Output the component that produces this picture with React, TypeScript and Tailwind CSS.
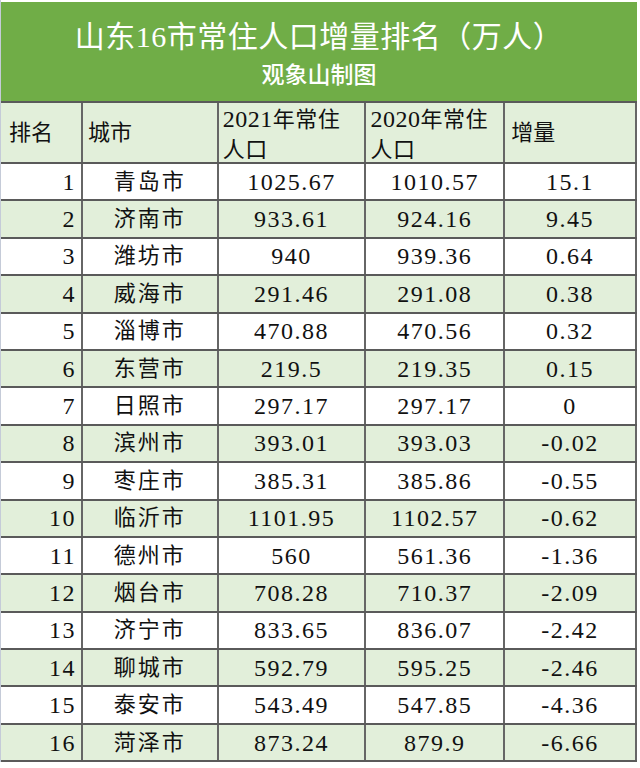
const rows = [
  [1, "青岛市", "1025.67", "1010.57", "15.1"],
  [2, "济南市", "933.61", "924.16", "9.45"],
  [3, "潍坊市", "940", "939.36", "0.64"],
  [4, "威海市", "291.46", "291.08", "0.38"],
  [5, "淄博市", "470.88", "470.56", "0.32"],
  [6, "东营市", "219.5", "219.35", "0.15"],
  [7, "日照市", "297.17", "297.17", "0"],
  [8, "滨州市", "393.01", "393.03", "-0.02"],
  [9, "枣庄市", "385.31", "385.86", "-0.55"],
  [10, "临沂市", "1101.95", "1102.57", "-0.62"],
  [11, "德州市", "560", "561.36", "-1.36"],
  [12, "烟台市", "708.28", "710.37", "-2.09"],
  [13, "济宁市", "833.65", "836.07", "-2.42"],
  [14, "聊城市", "592.79", "595.25", "-2.46"],
  [15, "泰安市", "543.49", "547.85", "-4.36"],
  [16, "菏泽市", "873.24", "879.9", "-6.66"],
];

const font =
  "font-['Liberation_Serif','Noto_Sans_CJK_SC',serif] text-[22px] leading-none text-[#111]";

const num = "text-[24px] tracking-[1.5px]";

export default function App() {
  return (
    <div className="w-[640px] h-[768px] bg-white overflow-hidden">
      <div className="w-[637px] border-l border-[#c5cbd8]">
        <div className="h-[2px] bg-white" />
        <div className="h-[99px] bg-[#70ad47] flex flex-col items-center text-white font-['Liberation_Serif','Noto_Sans_CJK_SC',serif]">
          <div className="mt-[20px] text-[30px] leading-none tracking-[0.5px]">
            山东16市常住人口增量排名（万人）
          </div>
          <div className="mt-[12px] text-[23px] leading-none font-medium">观象山制图</div>
        </div>
        <div className={`flex h-[63px] bg-[#e2efda] border-t-2 border-b-2 border-[#5a5a5a] ${font}`}>
          <div className="w-[82px] border-r-2 border-[#666] flex items-center pl-[8px]">排名</div>
          <div className="w-[136px] border-r-2 border-[#666] flex items-center pl-[5px]">城市</div>
          <div className="w-[148px] border-r-2 border-[#666] flex flex-col justify-center gap-[8px] pl-[4px] pt-[3px] tracking-[0.5px]">
            <span>
              <span className="text-[24px]">2021</span>年常住
            </span>
            <span>人口</span>
          </div>
          <div className="w-[139px] border-r-2 border-[#666] flex flex-col justify-center gap-[8px] pl-[4px] pt-[3px] tracking-[0.5px]">
            <span>
              <span className="text-[24px]">2020</span>年常住
            </span>
            <span>人口</span>
          </div>
          <div className="w-[132px] border-r-2 border-[#666] flex items-center pl-[6px]">增量</div>
        </div>
        {rows.map((r, i) => (
          <div
            key={i}
            className={`flex h-[37.4px] border-b-2 border-[#5a5a5a] ${font} ${
              i % 2 === 1 ? "bg-[#e2efda]" : "bg-white"
            }`}
          >
            <div className={`w-[82px] border-r-2 border-[#666] flex items-center justify-end pr-[5px] ${num}`}>
              {r[0]}
            </div>
            <div className="w-[136px] border-r-2 border-[#666] flex items-center justify-center tracking-[2px]">
              {r[1]}
            </div>
            <div className={`w-[148px] border-r-2 border-[#666] flex items-center justify-center ${num}`}>
              {r[2]}
            </div>
            <div className={`w-[139px] border-r-2 border-[#666] flex items-center justify-center ${num}`}>
              {r[3]}
            </div>
            <div className={`w-[132px] border-r-2 border-[#666] flex items-center justify-center ${num}`}>
              {r[4]}
            </div>
          </div>
        ))}
      </div>
    </div>
  );
}
